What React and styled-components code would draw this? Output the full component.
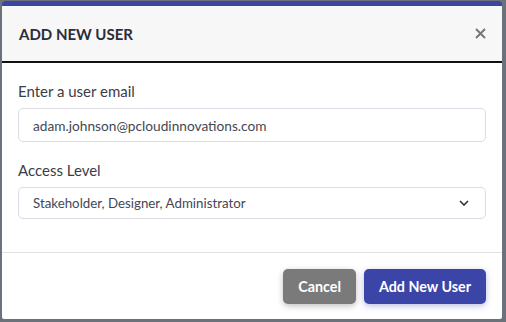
import React, { useState } from 'react';
import styled, { createGlobalStyle } from 'styled-components';

const GlobalStyle = createGlobalStyle`
  html, body {
    margin: 0;
    padding: 0;
    background: #6c727a;
    font-family: 'Source Sans Pro', Lato, 'Noto Sans', sans-serif;
  }
`;

const Backdrop = styled.div`
  width: 506px;
  height: 322px;
  padding: 1px 4px 0 2px;
  box-sizing: border-box;
`;

const Modal = styled.div`
  width: 500px;
  background: #fff;
  border-top: 5px solid #3b45a3;
  border-radius: 4px 4px 2px 2px;
  overflow: hidden;
`;

const Header = styled.header`
  display: flex;
  align-items: center;
  justify-content: space-between;
  height: 55px;
  padding: 0 18px 0 17px;
  background: #f7f7f7;
  border-bottom: 2px solid #111;
`;

const Title = styled.h2`
  margin: 0;
  font-size: 15px;
  font-weight: 700;
  color: #2a2d3a;
`;

const CloseButton = styled.button`
  border: 0;
  background: transparent;
  padding: 0;
  margin-right: -2px;
  display: flex;
  cursor: pointer;
`;

const Body = styled.div`
  display: flex;
  flex-direction: column;
  gap: 19px;
  padding: 19px 16px 33px 16px;
  border-bottom: 1px solid #e1e1e4;
`;

const Field = styled.div`
  display: flex;
  flex-direction: column;
  gap: 8px;
`;

const Label = styled.label`
  font-size: 15px;
  color: #3a3d48;
  line-height: 18px;
`;

const Input = styled.input`
  box-sizing: border-box;
  height: 34px;
  width: 100%;
  padding: 0 14px;
  border: 1px solid #dcdde4;
  border-radius: 5px;
  font-family: inherit;
  font-size: 13.7px;
  color: #444752;
  outline: 0;
`;

const SelectBox = styled.div`
  box-sizing: border-box;
  height: 32px;
  display: flex;
  align-items: center;
  justify-content: space-between;
  padding: 0 16px 0 14px;
  border: 1px solid #dcdde4;
  border-radius: 5px;
  font-size: 13.3px;
  color: #444752;
`;

const Footer = styled.footer`
  display: flex;
  justify-content: flex-end;
  gap: 8px;
  padding: 16px 16px 15px;
`;

const Button = styled.button`
  height: 35px;
  padding: 0 15px;
  border: 0;
  border-radius: 5px;
  font-family: inherit;
  font-size: 14.3px;
  font-weight: 700;
  color: #fff;
  background: ${(props) => (props.primary ? '#3b45a8' : '#7a7a7a')};
  box-shadow: ${(props) =>
    props.primary ? '0 2px 6px rgba(59, 69, 168, 0.35)' : '0 2px 6px rgba(0, 0, 0, 0.25)'};
  cursor: pointer;
`;

const App = () => {
  const [email, setEmail] = useState('adam.johnson@pcloudinnovations.com');

  return (
    <Backdrop>
      <GlobalStyle />
      <Modal>
        <Header>
          <Title>ADD NEW USER</Title>
          <CloseButton aria-label="Close">
            <svg width="11" height="11" viewBox="0 0 11 11">
              <path d="M1 1 L10 10 M10 1 L1 10" stroke="#777" strokeWidth="2" />
            </svg>
          </CloseButton>
        </Header>
        <Body>
          <Field>
            <Label>Enter a user email</Label>
            <Input value={email} onChange={(e) => setEmail(e.target.value)} />
          </Field>
          <Field>
            <Label>Access Level</Label>
            <SelectBox>
              <span>Stakeholder, Designer, Administrator</span>
              <svg width="10" height="6" viewBox="0 0 10 6">
                <path d="M1 1 L5 5 L9 1" fill="none" stroke="#333" strokeWidth="1.6" />
              </svg>
            </SelectBox>
          </Field>
        </Body>
        <Footer>
          <Button>Cancel</Button>
          <Button primary>Add New User</Button>
        </Footer>
      </Modal>
    </Backdrop>
  );
};

export default App;
